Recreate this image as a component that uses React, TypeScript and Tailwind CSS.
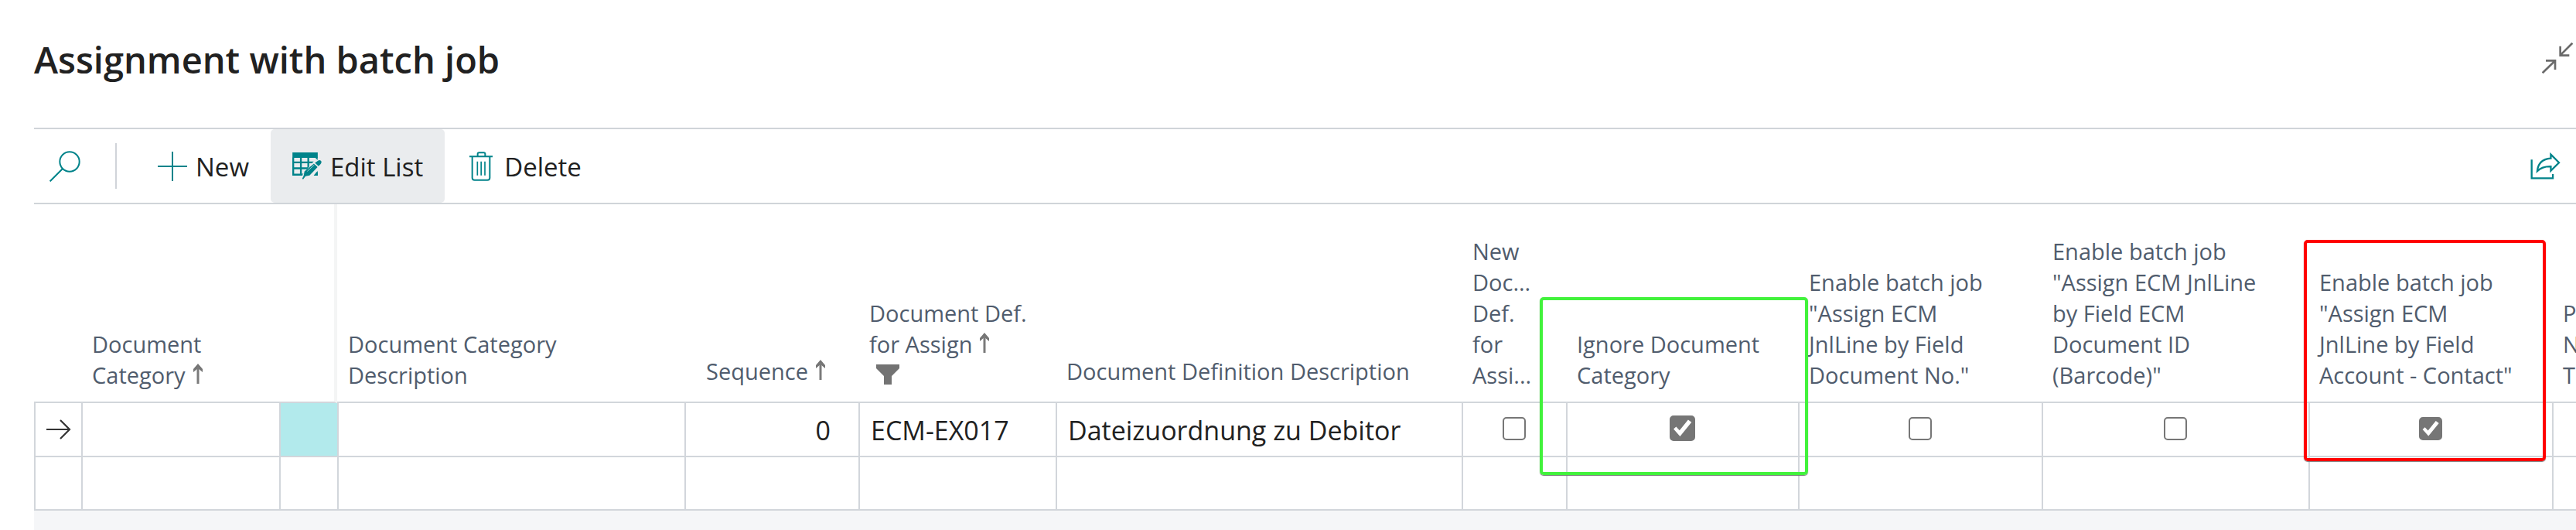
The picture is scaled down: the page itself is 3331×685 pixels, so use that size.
import type { ReactNode } from "react";

function SearchIcon() {
  return (
    <svg viewBox="0 0 120 120" className="h-10 w-10" fill="none" stroke="#00838a" strokeWidth="6" aria-hidden="true">
      <circle cx="78" cy="42" r="38" />
      <path d="M51 69 2 118" />
    </svg>
  );
}

function PlusIcon() {
  return (
    <svg viewBox="0 0 114 114" className="h-[38px] w-[38px]" stroke="#00838a" strokeWidth="6" aria-hidden="true">
      <path d="M57 0v114M0 57h114" />
    </svg>
  );
}

function EditListIcon() {
  return (
    <svg viewBox="0 0 114 106" className="h-[35px] w-[38px]" fill="none" aria-hidden="true">
      <path fill="#00838a" d="M0 0h99v21H0z" />
      <path stroke="#00838a" strokeWidth="7" d="M3 20v70M33 20v70M62 20v50M95 20v70M0 39h99M0 62h99M0 87h99" />
      <path stroke="#eaecee" strokeWidth="36" d="M106 36 52 100" />
      <path fill="#00838a" d="M101 32q8-5 12 3 2 6-4 12l-7 7-14-13zM85 43l14 14-32 33-16 3-9 12-4-2 6-12 3-17zM94 77l5 0v13H84z" />
      <path stroke="#eaecee" strokeWidth="3" d="M84 42l16 15" />
      <path stroke="#9fd0d3" strokeWidth="3" d="M58 74l28-26" />
    </svg>
  );
}

function TrashIcon() {
  return (
    <svg viewBox="0 0 90 114" className="h-[38px] w-[30px]" fill="none" stroke="#00838a" strokeWidth="6" aria-hidden="true">
      <path d="M0 19h90M32 18V9q0-5 5-5h19q5 0 5 5v9M11 20v81q0 9 9 9h50q9 0 9-9V20" />
      <path strokeWidth="5" d="M31 38v54M45.500 38v54M60 38v54" />
    </svg>
  );
}

function ShareIcon() {
  return (
    <svg viewBox="0 0 116 106" className="h-[35px] w-[39px]" fill="none" stroke="#00838a" strokeWidth="7" aria-hidden="true">
      <path d="M4 28v73h83V85" />
      <path d="M79 8l32 32-32 32V55Q46 54 26 73 30 27 79 23z" />
    </svg>
  );
}

function CollapseIcon() {
  return (
    <svg viewBox="0 0 120 120" className="h-10 w-10" fill="none" stroke="#6b6b6b" strokeWidth="8" aria-hidden="true">
      <path d="M118 2 71 49M71 14v36h35M2 118l48-47M15 70h36v35" />
    </svg>
  );
}

function SortArrow() {
  return (
    <svg viewBox="0 0 14 26" className="ml-[9px] inline-block h-[26px] w-[14px] align-baseline" fill="none" aria-hidden="true">
      <path fill="#757575" d="M7 0l6 7v4L7 6 1 11V7z" />
      <path stroke="#7a7a7a" strokeWidth="3" d="M7 4v22" />
    </svg>
  );
}

function FilterIcon() {
  return (
    <svg viewBox="0 0 30 26" className="mx-[9px] mt-[6px] mb-2 block h-[26px] w-[30px]" fill="#737373" aria-hidden="true">
      <path d="M0 0h30v5L20 15v11H10V15L0 5z" />
    </svg>
  );
}

function RowArrow() {
  return (
    <svg viewBox="0 0 32 26" className="mx-auto block h-[26px] w-8" fill="none" stroke="#333" strokeWidth="2.200" aria-hidden="true">
      <path d="M0 13h30M18 1l12 12-12 12" />
    </svg>
  );
}

function CheckCell({ label, checked = false, large = false }: { label: string; checked?: boolean; large?: boolean }) {
  return (
    <div className="mr-auto ml-auto grid w-fit place-items-center pr-[2px] pb-[3px]">
      <input
        type="checkbox"
        aria-label={label}
        defaultChecked={checked}
        className={
          "peer col-start-1 row-start-1 appearance-none rounded-[5px] border-2 border-[#767676] bg-white checked:bg-[#767676] " +
          (large ? "size-[33px]" : "size-[30px]")
        }
      />
      <svg
        viewBox="0 0 98 98"
        className={"pointer-events-none invisible col-start-1 row-start-1 peer-checked:visible " + (large ? "size-[33px]" : "size-[30px]")}
        fill="#fff"
        aria-hidden="true"
      >
        <path d="M15 52l10-9 13 14 33-41 13 10-44 54z" />
      </svg>
    </div>
  );
}

function Lines({ lines, children }: { lines: string[]; children?: ReactNode }) {
  return (
    <>
      {lines.map((line, i) => (
        <span key={line} className="block whitespace-nowrap">
          {line}
          {i === lines.length - 1 && children}
        </span>
      ))}
    </>
  );
}

const head = "border-b-2 border-[#d2d6db] pb-[14px] pl-[14px] text-left align-bottom font-normal";
const headSingle = "border-b-2 border-[#d2d6db] pb-[19px] pl-[14px] text-left align-bottom font-normal";
const cell = "border-b-2 border-l-2 border-[#d2d6db] p-0";
const textCell = "border-b-2 border-l-2 border-[#d2d6db] pt-[2px] pr-0 pb-0 pl-[14px] whitespace-nowrap";

export default function App() {
  return (
    <main className="flex min-h-screen flex-col overflow-hidden bg-white pl-11 font-['Open_Sans','Noto_Sans',sans-serif] text-[#212121]">
      <header className="flex items-start justify-between pt-[47px] pr-1 pb-[58px]">
        <h1 className="text-[47px] leading-[60px] font-semibold">Assignment with batch job</h1>
        <button type="button" aria-label="Collapse" className="mt-2">
          <CollapseIcon />
        </button>
      </header>

      <div role="toolbar" aria-label="Actions" className="flex h-[99px] items-stretch border-y-2 border-[#d0d4d9] text-[33px]">
        <button type="button" aria-label="Search" className="px-5">
          <SearchIcon />
        </button>
        <div className="mr-[25px] ml-[25px] my-[18px] w-[2px] bg-[#d0d4d9]" />
        <button type="button" className="flex items-center gap-[11px] px-7">
          <PlusIcon />
          <span className="pt-[2px]">New</span>
        </button>
        <button type="button" aria-pressed="true" className="flex items-center gap-[11px] rounded-[5px] bg-[#eaecee] px-7">
          <EditListIcon />
          <span className="pt-[2px]">Edit List</span>
        </button>
        <button type="button" className="flex items-center gap-[11px] px-7">
          <span className="flex w-[38px] justify-center">
            <TrashIcon />
          </span>
          <span className="pt-[2px]">Delete</span>
        </button>
        <button type="button" aria-label="Share" className="ml-auto px-5">
          <ShareIcon />
        </button>
      </div>

      <table className="w-full table-fixed border-separate border-spacing-0">
        <colgroup>
          <col className="w-[61px]" />
          <col className="w-[256px]" />
          <col className="w-[75px]" />
          <col className="w-[449px]" />
          <col className="w-[225px]" />
          <col className="w-[255px]" />
          <col className="w-[525px]" />
          <col className="w-[135px]" />
          <col className="w-[300px]" />
          <col className="w-[315px]" />
          <col className="w-[345px]" />
          <col className="w-[315px]" />
          <col />
        </colgroup>
        <thead className="text-[29px] leading-10 text-[#505c6d]">
          <tr className="h-[257px]">
            <td className={head} />
            <th scope="col" className={head}>
              <Lines lines={["Document", "Category"]}>
                <SortArrow />
              </Lines>
            </th>
            <td className="border-r-4 border-b-2 border-r-[#f4f5f5] border-b-[#d2d6db]" />
            <th scope="col" className={head}>
              <Lines lines={["Document Category", "Description"]} />
            </th>
            <th scope="col" className={headSingle}>
              <div className="pr-[42px] text-right whitespace-nowrap">
                Sequence
                <SortArrow />
              </div>
            </th>
            <th scope="col" className={head}>
              <Lines lines={["Document Def.", "for Assign"]}>
                <SortArrow />
              </Lines>
              <FilterIcon />
            </th>
            <th scope="col" className={headSingle}>
              Document Definition Description
            </th>
            <th scope="col" className={head}>
              <Lines lines={["New", "Doc...", "Def.", "for", "Assi..."]} />
            </th>
            <th scope="col" className={"relative " + head}>
              <Lines lines={["Ignore Document", "Category"]} />
              <div className="pointer-events-none absolute top-[120px] -left-[34px] z-10 h-[230px] w-[347px] rounded-[5px] border-4 border-[#42f23c] shadow-[0_1px_1px_#777]" />
            </th>
            <th scope="col" className={head}>
              <Lines lines={["Enable batch job", '"Assign ECM', "JnlLine by Field", 'Document No."']} />
            </th>
            <th scope="col" className={head}>
              <Lines lines={["Enable batch job", '"Assign ECM JnlLine', "by Field ECM", "Document ID", '(Barcode)"']} />
            </th>
            <th scope="col" className={"relative " + head}>
              <Lines lines={["Enable batch job", '"Assign ECM', "JnlLine by Field", 'Account - Contact"']} />
              <div className="pointer-events-none absolute top-[46px] -left-[6px] z-10 h-[286px] w-[313px] rounded-[5px] border-4 border-[#ff0000] shadow-[0_1px_1px_#777]" />
            </th>
            <th scope="col" className={"overflow-hidden " + head}>
              <Lines lines={["P", "N", "Tr"]} />
            </th>
          </tr>
        </thead>
        <tbody className="text-[34px]">
          <tr className="h-[70px]">
            <td className={cell}>
              <RowArrow />
            </td>
            <td className={cell} />
            <td className={"bg-[#b2eaec] " + cell} />
            <td className={cell} />
            <td className={textCell + " text-right"}>
              <span className="pr-9">0</span>
            </td>
            <td className={textCell}>ECM-EX017</td>
            <td className={textCell}>Dateizuordnung zu Debitor</td>
            <td className={cell}>
              <CheckCell label="New Document Def. for Assign" />
            </td>
            <td className={cell}>
              <CheckCell label="Ignore Document Category" checked large />
            </td>
            <td className={cell}>
              <CheckCell label="Enable batch job by Document No." />
            </td>
            <td className={cell}>
              <CheckCell label="Enable batch job by Document ID" />
            </td>
            <td className={cell}>
              <CheckCell label="Enable batch job by Account - Contact" checked />
            </td>
            <td className={cell} />
          </tr>
          <tr className="h-[69px]">
            <td className={cell} />
            <td className={cell} />
            <td className={cell} />
            <td className={cell} />
            <td className={cell} />
            <td className={cell} />
            <td className={cell} />
            <td className={cell} />
            <td className={cell} />
            <td className={cell} />
            <td className={cell} />
            <td className={cell} />
            <td className={cell} />
          </tr>
        </tbody>
      </table>
      <div className="flex-1 bg-[#f5f6f8]" />
    </main>
  );
}
